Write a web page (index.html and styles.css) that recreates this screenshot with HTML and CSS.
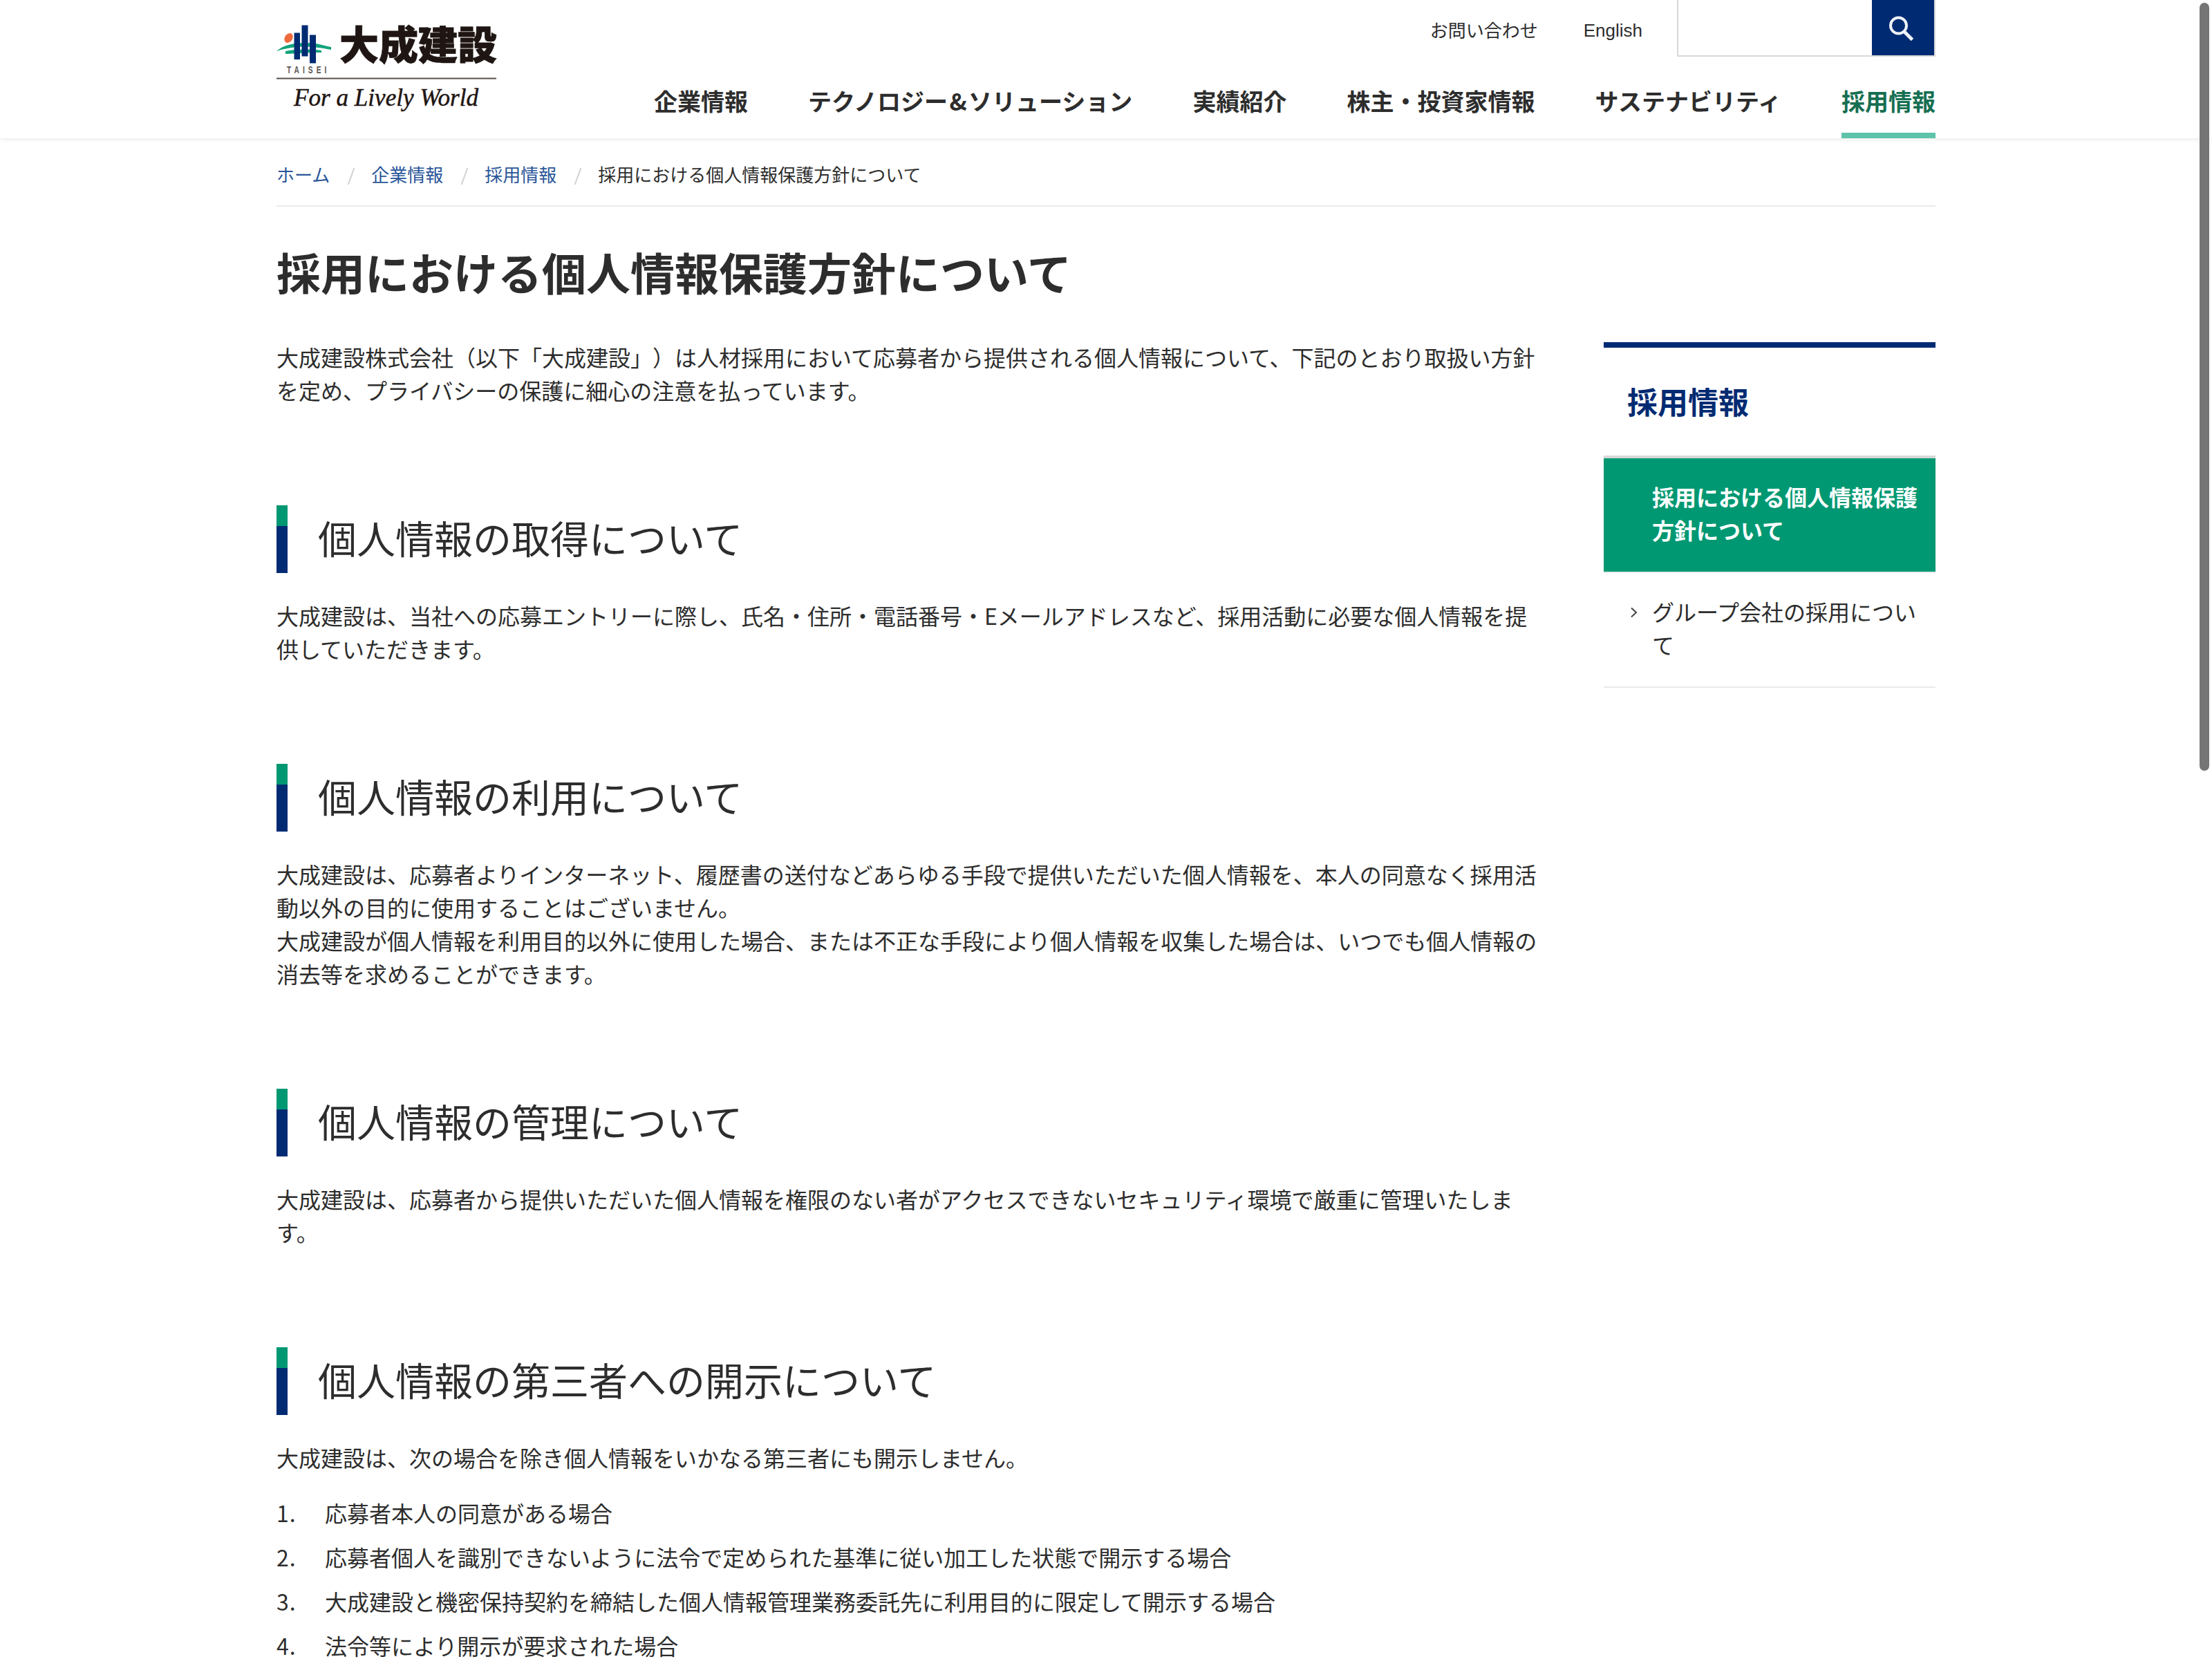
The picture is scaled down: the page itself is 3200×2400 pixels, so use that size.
FILE: index.html
```html
<!DOCTYPE html>
<html lang="ja">
<head>
    <meta charset="UTF-8">
    <meta name="viewport" content="width=device-width, initial-scale=1.0">
    <title>採用における個人情報保護方針について | 大成建設株式会社</title>
    <link rel="stylesheet" href="styles.css">
</head>
<body>
    <header class="header">
        <div class="container header-inner">
            <a class="logo" href="#">
                <svg width="320" height="170" viewBox="0 -30 320 170">
                    <ellipse cx="17.500" cy="25" rx="5.500" ry="7.500" fill="#ee6a3c" transform="rotate(35 17.500 25)"/>
                    <path d="M0 44C10 35 25 32 42 32S68 36 79 38V42C64 39 52 37.500 40 37.500S12 40 0 44Z" fill="#12a37c"/>
                    <path d="M13 44C28 41 52 41 65 43V46C48 46 32 47 13 48Z" fill="#12a37c"/>
                    <g fill="#002b72">
                        <rect x="25.500" y="17.500" width="8.500" height="38.500"/>
                        <rect x="36.500" y="6.500" width="9" height="45"/>
                        <rect x="48" y="20.500" width="9" height="41"/>
                    </g>
                    <text class="logo-en" transform="translate(15 76) scale(0.7 1)" textLength="82">TAISEI</text>
                    <text class="logo-ja" x="91" y="56" textLength="228">大成建設</text>
                    <rect x="0" y="82.500" width="318" height="2" fill="#594f4c"/>
                    <text class="logo-copy" x="25" y="123" textLength="267" lengthAdjust="spacingAndGlyphs">For a Lively World</text>
                </svg>
            </a>
            <div class="header-right">
                <div class="header-top">
                    <a href="#">お問い合わせ</a>
                    <a href="#" class="english">English</a>
                    <form class="search">
                        <input type="text" aria-label="検索">
                        <button type="button" aria-label="検索">
                            <svg width="88" height="80" viewBox="0 0 88 80" fill="none" stroke="#eef1f6">
                                <circle cx="38.500" cy="37" r="11.500" stroke-width="4"/>
                                <path d="M47 46L58.500 57.500" stroke-width="5"/>
                            </svg>
                        </button>
                    </form>
                </div>
                <nav class="nav">
                    <a href="#">企業情報</a>
                    <a href="#">テクノロジー<span class="amp">&amp;</span>ソリューション</a>
                    <a href="#">実績紹介</a>
                    <a href="#">株主・投資家情報</a>
                    <a href="#">サステナビリティ</a>
                    <a href="#" class="current">採用情報</a>
                </nav>
            </div>
        </div>
    </header>

    <div class="container">
        <ul class="breadcrumb">
            <li><a href="#">ホーム</a></li>
            <li><a href="#">企業情報</a></li>
            <li><a href="#">採用情報</a></li>
            <li>採用における個人情報保護方針について</li>
        </ul>
        <h1>採用における個人情報保護方針について</h1>

        <div class="columns">
            <main>
                <p>大成建設株式会社（以下「大成建設」）は人材採用において応募者から提供される個人情報について、下記のとおり取扱い方針を定め、プライバシーの保護に細心の注意を払っています。</p>

                <section>
                    <h2>個人情報の取得について</h2>
                    <p>大成建設は、当社への応募エントリーに際し、氏名・住所・電話番号・Eメールアドレスなど、採用活動に必要な個人情報を提供していただきます。</p>
                </section>

                <section>
                    <h2>個人情報の利用について</h2>
                    <p>大成建設は、応募者よりインターネット、履歴書の送付などあらゆる手段で提供いただいた個人情報を、本人の同意なく採用活動以外の目的に使用することはございません。<br>大成建設が個人情報を利用目的以外に使用した場合、または不正な手段により個人情報を収集した場合は、いつでも個人情報の消去等を求めることができます。</p>
                </section>

                <section>
                    <h2>個人情報の管理について</h2>
                    <p>大成建設は、応募者から提供いただいた個人情報を権限のない者がアクセスできないセキュリティ環境で厳重に管理いたします。</p>
                </section>

                <section>
                    <h2>個人情報の第三者への開示について</h2>
                    <p>大成建設は、次の場合を除き個人情報をいかなる第三者にも開示しません。</p>
                    <ol class="list">
                        <li><span class="num">1.</span>応募者本人の同意がある場合</li>
                        <li><span class="num">2.</span>応募者個人を識別できないように法令で定められた基準に従い加工した状態で開示する場合</li>
                        <li><span class="num">3.</span>大成建設と機密保持契約を締結した個人情報管理業務委託先に利用目的に限定して開示する場合</li>
                        <li><span class="num">4.</span>法令等により開示が要求された場合</li>
                    </ol>
                </section>
            </main>

            <aside class="side">
                <p class="side-title">採用情報</p>
                <ul>
                    <li class="active"><a href="#">採用における個人情報保護方針について</a></li>
                    <li>
                        <svg class="arrow" width="12" height="16" viewBox="0 0 12 16" fill="none" stroke="#444" stroke-width="2">
                            <path d="M2 1.500L9 8L2 14.500"/>
                        </svg>
                        <a href="#">グループ会社の採用について</a>
                    </li>
                </ul>
            </aside>
        </div>
    </div>

    <div class="scrollbar"></div>
</body>
</html>
```
FILE: styles.css
```css
* {
    box-sizing: border-box;
    margin: 0;
    padding: 0;
}

html, body {
    height: 2400px;
    overflow: hidden;
}

body {
    background: #fff;
    color: #2d2d2d;
    font-family: "Noto Sans CJK JP", sans-serif;
    font-size: 32px;
    line-height: 48px;
    text-spacing-trim: space-all;
}

a {
    color: inherit;
    text-decoration: none;
}

ul, ol {
    list-style: none;
}

.container {
    width: 2400px;
    margin: 0 auto;
}

/* header */
.header {
    height: 200px;
    background: #fff;
    box-shadow: 0 0 8px rgba(0, 0, 0, 0.12);
}

.header-inner {
    display: flex;
    justify-content: space-between;
}

.logo svg {
    display: block;
}

.logo-en {
    font-family: "Liberation Sans", sans-serif;
    font-size: 14.5px;
    font-weight: bold;
    fill: #5a5452;
}

.logo-ja {
    font-size: 57px;
    font-weight: 900;
    fill: #1f1613;
    stroke: #1f1613;
    stroke-width: 0.8px;
}

.logo-copy {
    font-family: "Liberation Serif", serif;
    font-style: italic;
    font-size: 36px;
    fill: #1f1613;
    stroke: #1f1613;
    stroke-width: 0.5px;
}

.header-right {
    width: 1854px;
}

.header-top {
    display: flex;
    justify-content: flex-end;
    height: 82px;
    font-size: 26px;
    line-height: 86px;
}

.english {
    margin: 0 50px 0 66px;
    font-family: "Liberation Sans", sans-serif;
    line-height: 88px;
}

.search {
    display: flex;
    width: 374px;
    height: 82px;
    border: 2px solid #d8d8d8;
    border-top: none;
}

.search input {
    width: 280px;
    border: none;
    outline: none;
}

.search button {
    flex: 1;
    border: none;
    background: #002b72;
    cursor: pointer;
}

.search svg {
    display: block;
}

.nav {
    display: flex;
    justify-content: space-between;
    height: 118px;
    font-size: 34px;
    font-weight: bold;
    line-height: 50px;
}

.nav a {
    padding-top: 39px;
    white-space: nowrap;
}

.nav .amp {
    display: inline-block;
    width: 30px;
    text-align: center;
}

.nav .current {
    color: #166f51;
    border-bottom: 8px solid #5fc3aa;
}

/* breadcrumb */
.breadcrumb {
    display: flex;
    height: 99px;
    border-bottom: 2px solid #eaeaea;
    font-size: 26px;
    line-height: 104px;
}

.breadcrumb li + li::before {
    content: "";
    display: inline-block;
    width: 2px;
    height: 24px;
    margin: 0 28px 0 30px;
    background: #d0d0d0;
    transform: skewX(-20deg);
    vertical-align: -4px;
}

.breadcrumb a {
    color: #2a5699;
}

h1 {
    padding-top: 45px;
    font-size: 64px;
    line-height: 96px;
}

/* contents */
.columns {
    display: flex;
    justify-content: space-between;
    align-items: flex-start;
    padding-top: 55px;
}

main {
    width: 1824px;
    margin-top: -3px;
}

section {
    margin-top: 143px;
}

h2 {
    height: 98px;
    margin-bottom: 37px;
    padding-left: 60px;
    background: linear-gradient(#009872 30px, #002b72 30px) no-repeat left / 16px 98px;
    font-size: 56px;
    font-weight: normal;
    line-height: 92px;
}

.list {
    margin-top: 32px;
}

.list li {
    display: flex;
    margin-bottom: 16px;
}

.num {
    width: 70px;
    letter-spacing: 1px;
}

/* side menu */
.side {
    width: 480px;
    border-top: 8px solid #002b72;
}

.side-title {
    height: 160px;
    padding-left: 34px;
    border-bottom: 4px solid #d8d8d8;
    color: #002b72;
    font-size: 44px;
    font-weight: bold;
    line-height: 155px;
}

.side li {
    position: relative;
    padding: 31px 20px 37px 70px;
    border-bottom: 2px solid #eaeaea;
}

.side .active {
    background: #009872;
    background-clip: padding-box;
    color: #fff;
    font-weight: bold;
}

.side a {
    display: block;
}

.arrow {
    position: absolute;
    left: 38px;
    top: 49px;
}

.scrollbar {
    position: fixed;
    top: 4px;
    right: 4px;
    width: 14px;
    height: 1111px;
    border-radius: 7px;
    background: #757575;
}
```
